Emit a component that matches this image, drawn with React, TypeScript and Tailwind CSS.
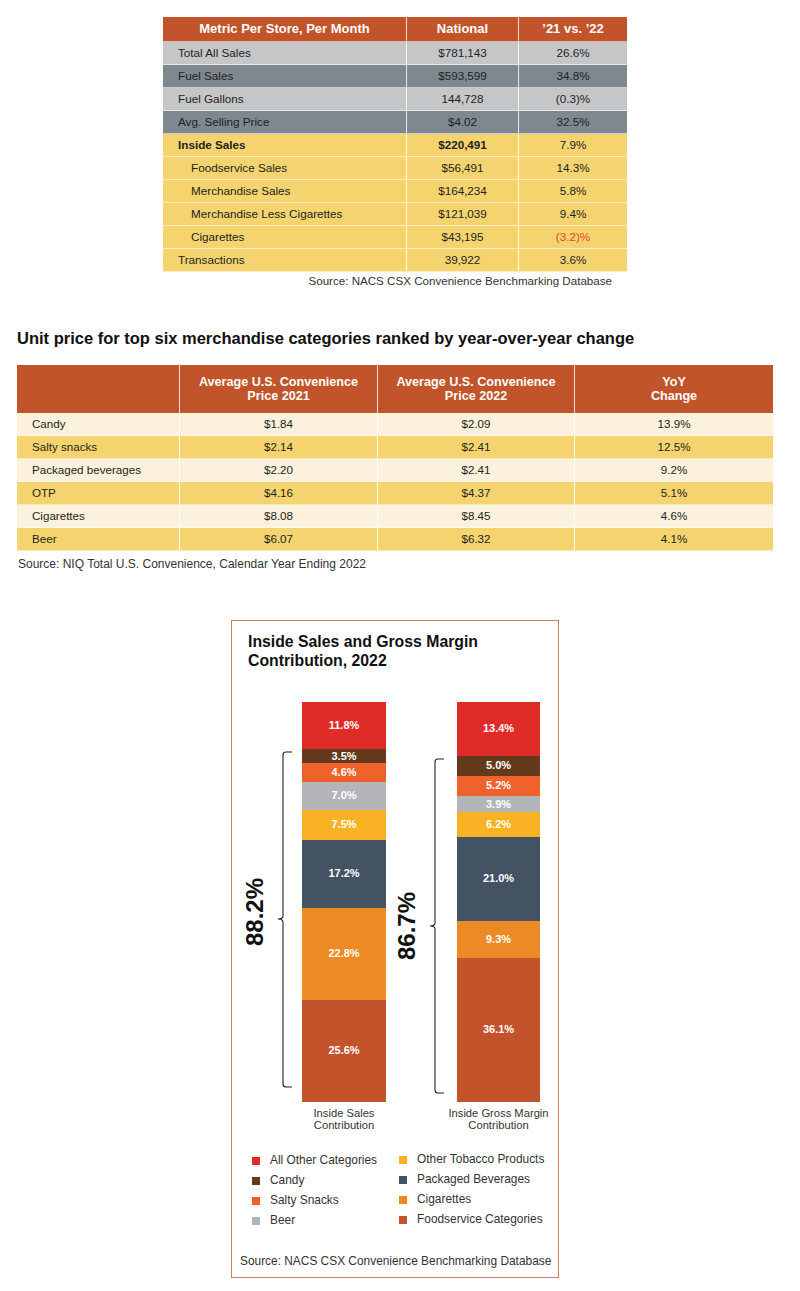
import React from 'react';

const FONT = { fontFamily: '"Liberation Sans", Arial, sans-serif' };

type StoreRow = {
  label: string;
  nat: string;
  chg: string;
  bg: string;
  bold?: boolean;
  indent?: boolean;
  red?: boolean;
};

const storeRows: StoreRow[] = [
  { label: 'Total All Sales', nat: '$781,143', chg: '26.6%', bg: 'bg-[#c5c6c8]' },
  { label: 'Fuel Sales', nat: '$593,599', chg: '34.8%', bg: 'bg-[#7e888e]' },
  { label: 'Fuel Gallons', nat: '144,728', chg: '(0.3)%', bg: 'bg-[#c5c6c8]' },
  { label: 'Avg. Selling Price', nat: '$4.02', chg: '32.5%', bg: 'bg-[#7e888e]' },
  { label: 'Inside Sales', nat: '$220,491', chg: '7.9%', bg: 'bg-[#f5d470]', bold: true },
  { label: 'Foodservice Sales', nat: '$56,491', chg: '14.3%', bg: 'bg-[#f5d470]', indent: true },
  { label: 'Merchandise Sales', nat: '$164,234', chg: '5.8%', bg: 'bg-[#f5d470]', indent: true },
  { label: 'Merchandise Less Cigarettes', nat: '$121,039', chg: '9.4%', bg: 'bg-[#f5d470]', indent: true },
  { label: 'Cigarettes', nat: '$43,195', chg: '(3.2)%', bg: 'bg-[#f5d470]', indent: true, red: true },
  { label: 'Transactions', nat: '39,922', chg: '3.6%', bg: 'bg-[#f5d470]' },
];

const priceRows = [
  ['Candy', '$1.84', '$2.09', '13.9%'],
  ['Salty snacks', '$2.14', '$2.41', '12.5%'],
  ['Packaged beverages', '$2.20', '$2.41', '9.2%'],
  ['OTP', '$4.16', '$4.37', '5.1%'],
  ['Cigarettes', '$8.08', '$8.45', '4.6%'],
  ['Beer', '$6.07', '$6.32', '4.1%'],
];

const C = {
  other: '#e12b29',
  candy: '#633a1b',
  salty: '#f0622b',
  beer: '#b3b5b8',
  otp: '#f9b224',
  bev: '#435364',
  cig: '#ee8a25',
  food: '#c2532a',
};

const salesBar = [
  { v: 11.8, c: C.other },
  { v: 3.5, c: C.candy },
  { v: 4.6, c: C.salty },
  { v: 7.0, c: C.beer },
  { v: 7.5, c: C.otp },
  { v: 17.2, c: C.bev },
  { v: 22.8, c: C.cig },
  { v: 25.6, c: C.food },
];

const marginBar = [
  { v: 13.4, c: C.other },
  { v: 5.0, c: C.candy },
  { v: 5.2, c: C.salty },
  { v: 3.9, c: C.beer },
  { v: 6.2, c: C.otp },
  { v: 21.0, c: C.bev },
  { v: 9.3, c: C.cig },
  { v: 36.1, c: C.food },
];

const legendLeft = [
  ['All Other Categories', C.other],
  ['Candy', C.candy],
  ['Salty Snacks', C.salty],
  ['Beer', C.beer],
];
const legendRight = [
  ['Other Tobacco Products', C.otp],
  ['Packaged Beverages', C.bev],
  ['Cigarettes', C.cig],
  ['Foodservice Categories', C.food],
];

function Bar({ data }: { data: { v: number; c: string }[] }) {
  return (
    <div className="flex flex-col h-[400px] w-full">
      {data.map((s) => (
        <div
          key={s.v + s.c}
          className="flex items-center justify-center text-white font-bold text-[11px] leading-none"
          style={{ backgroundColor: s.c, height: `${s.v}%` }}
        >
          {s.v.toFixed(1)}%
        </div>
      ))}
    </div>
  );
}

// curly brace, local coords: top / middle / bottom in px from bar top
function Brace({ top, mid, bottom }: { top: number; mid: number; bottom: number }) {
  const d = `M18 ${top} L12 ${top} Q9 ${top} 9 ${top + 3} L9 ${mid - 3} Q9 ${mid} 4 ${mid} Q9 ${mid} 9 ${mid + 3} L9 ${bottom - 3} Q9 ${bottom} 12 ${bottom} L18 ${bottom}`;
  return (
    <svg width="20" height="400" viewBox="0 0 20 400" className="shrink-0">
      <path d={d} fill="none" stroke="#231f20" strokeWidth="1.1" />
    </svg>
  );
}

export default function App() {
  return (
    <div className="w-[800px] min-h-[1291px] bg-white text-[#231f20]" style={FONT}>
      {/* Store metrics table */}
      <div className="pt-[17px] ml-[163px] w-[464px]">
        <div className="grid grid-cols-[244px_112px_108px] bg-[#c1542b] text-white font-bold text-[13px] h-[25px] items-center border-b border-white/60">
          <div className="text-center border-r border-white/80 h-full flex items-center justify-center">Metric Per Store, Per Month</div>
          <div className="text-center border-r border-white/80 h-full flex items-center justify-center">National</div>
          <div className="text-center">’21 vs. ’22</div>
        </div>
        {storeRows.map((r) => (
          <div key={r.label} className={`grid grid-cols-[244px_112px_108px] h-[23px] text-[11.7px] border-b border-white/60 ${r.bg}`}>
            <div className={`flex items-center border-r border-white/80 ${r.indent ? 'pl-[28px]' : 'pl-[15px]'} ${r.bold ? 'font-bold' : ''}`}>{r.label}</div>
            <div className={`flex items-center justify-center border-r border-white/80 ${r.bold ? 'font-bold' : ''}`}>{r.nat}</div>
            <div className={`flex items-center justify-center ${r.red ? 'text-[#e8452c]' : ''}`}>{r.chg}</div>
          </div>
        ))}
        <div className="text-right pr-[15px] text-[11.6px] leading-[14px] mt-[2px] text-[#333]">
          Source: NACS CSX Convenience Benchmarking Database
        </div>
      </div>

      {/* Unit price table */}
      <div className="mt-[40px] ml-[17px] text-[16.5px] font-bold leading-[20px] text-[#111]">
        Unit price for top six merchandise categories ranked by year-over-year change
      </div>
      <div className="mt-[17px] ml-[17px] w-[756px]">
        <div className="grid grid-cols-[163px_198px_197px_198px] h-[48px] bg-[#c1542b] text-white font-bold text-[12.6px] leading-[14px]">
          <div className="border-r border-white/80" />
          <div className="flex items-center justify-center text-center border-r border-white/80">Average U.S. Convenience<br />Price 2021</div>
          <div className="flex items-center justify-center text-center border-r border-white/80">Average U.S. Convenience<br />Price 2022</div>
          <div className="flex items-center justify-center text-center">YoY<br />Change</div>
        </div>
        {priceRows.map((r, i) => (
          <div key={r[0]} className={`grid grid-cols-[163px_198px_197px_198px] h-[23px] text-[11.6px] border-b border-white/50 ${i % 2 === 0 ? 'bg-[#fbf1dc]' : 'bg-[#f5d470]'}`}>
            <div className="flex items-center pl-[15px] border-r border-white">{r[0]}</div>
            <div className="flex items-center justify-center border-r border-white">{r[1]}</div>
            <div className="flex items-center justify-center border-r border-white">{r[2]}</div>
            <div className="flex items-center justify-center">{r[3]}</div>
          </div>
        ))}
        <div className="mt-[6px] ml-[1px] text-[12px] leading-[14px] text-[#333]">
          Source: NIQ Total U.S. Convenience, Calendar Year Ending 2022
        </div>
      </div>

      {/* Chart */}
      <div className="mt-[49px] ml-[231px] w-[328px] h-[658px] border-[1.5px] border-[#d0805e] flex flex-col">
        <div className="pt-[11px] pl-[16px] text-[15.8px] font-bold leading-[19px] text-[#111]">
          Inside Sales and Gross Margin<br />Contribution, 2022
        </div>

        <div className="mt-[32px] pl-[12px] flex items-start">
          <div className="w-[22px] h-[400px] pt-[176px] flex justify-center items-start shrink-0">
            <div className="[writing-mode:vertical-rl] rotate-180 text-[24px] font-bold leading-[22px] text-[#111]">88.2%</div>
          </div>
          <div className="ml-[8px]">
            <Brace top={50} mid={217} bottom={385} />
          </div>
          <div className="ml-[8px] w-[84px] shrink-0 flex flex-col items-center">
            <Bar data={salesBar} />
            <div className="mt-[5px] text-[11.2px] leading-[12px] text-center whitespace-nowrap text-[#333]">
              Inside Sales<br />Contribution
            </div>
          </div>
          <div className="ml-[10px] w-[22px] h-[400px] pt-[190px] flex justify-center items-start shrink-0">
            <div className="[writing-mode:vertical-rl] rotate-180 text-[24px] font-bold leading-[22px] text-[#111]">86.7%</div>
          </div>
          <div className="ml-[8px]">
            <Brace top={57} mid={224} bottom={391} />
          </div>
          <div className="ml-[11px] w-[83px] shrink-0 flex flex-col items-center">
            <Bar data={marginBar} />
            <div className="mt-[5px] text-[11.2px] leading-[12px] text-center whitespace-nowrap text-[#333]">
              Inside Gross Margin<br />Contribution
            </div>
          </div>
        </div>

        <div className="mt-[20px] pl-[20px] flex text-[11.9px] text-[#333]">
          <div className="w-[147px] flex flex-col">
            {legendLeft.map(([t, c]) => (
              <div key={t} className="h-[20px] flex items-center">
                <span className="w-[8px] h-[8px] mr-[10px] shrink-0" style={{ backgroundColor: c }} />
                {t}
              </div>
            ))}
          </div>
          <div className="flex flex-col -mt-[1px]">
            {legendRight.map(([t, c]) => (
              <div key={t} className="h-[20px] flex items-center">
                <span className="w-[8px] h-[8px] mr-[10px] shrink-0" style={{ backgroundColor: c }} />
                {t}
              </div>
            ))}
          </div>
        </div>

        <div className="mt-[23px] pl-[8px] text-[11.9px] leading-[14px] text-[#333]">
          Source: NACS CSX Convenience Benchmarking Database
        </div>
      </div>
    </div>
  );
}
